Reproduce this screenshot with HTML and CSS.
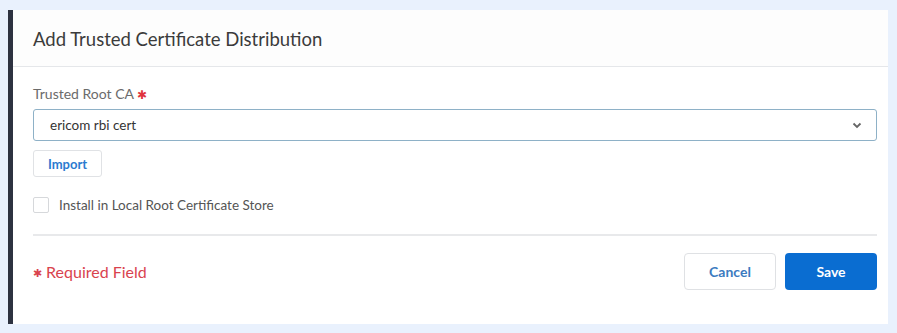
FILE: index.html
```html
<!DOCTYPE html>
<html lang="en">
<head>
    <meta charset="UTF-8">
    <title>Add Trusted Certificate Distribution</title>
    <link rel="stylesheet" href="styles.css">
</head>
<body>
    <div class="panel">
        <div class="panel-header">
            <h1>Add Trusted Certificate Distribution</h1>
        </div>
        <div class="panel-body">
            <label class="field-label">Trusted Root CA <span class="req">&#10033;</span></label>
            <div class="select">
                <span>ericom rbi cert</span>
                <svg class="chevron" width="10" height="7" viewBox="0 0 10 7">
                    <path d="M1.5 1.5 L5 5 L8.5 1.5" fill="none" stroke="#666" stroke-width="1.8"/>
                </svg>
            </div>
            <button class="btn-import">Import</button>
            <label class="check-row">
                <span class="checkbox"></span>
                Install in Local Root Certificate Store
            </label>
            <div class="divider"></div>
            <div class="footer">
                <span class="required"><span class="req-star">&#10033;</span> Required Field</span>
                <div class="actions">
                    <button class="btn btn-cancel">Cancel</button>
                    <button class="btn btn-save">Save</button>
                </div>
            </div>
        </div>
    </div>
</body>
</html>
```

FILE: styles.css
```css
body {
    margin: 0;
    padding: 10px 9px 0 8px;
    background-color: #e9f1fd;
    font-family: Lato, 'Open Sans', sans-serif;
}
.panel {
    width: 875px;
    height: 314px;
    background: white;
    border-left: 5px solid #2d3240;
    box-sizing: content-box;
}
.panel-header {
    height: 56px;
    border-bottom: 1px solid #e5e7ea;
    background: #fdfdfd;
    display: flex;
    align-items: center;
    padding-left: 20px;
}
h1 {
    margin: 0;
    font-size: 18.5px;
    font-weight: 400;
    color: #3b3b3b;
    padding-top: 1px;
}
.panel-body {
    padding: 18px 11px 0 20px;
    display: flex;
    flex-direction: column;
    align-items: flex-start;
}
.field-label {
    font-size: 14px;
    line-height: 17px;
    color: #6b6b6b;
    margin-bottom: 6px;
}
.req {
    color: #e0333d;
    font-size: 12px;
}
.select {
    width: 100%;
    height: 32px;
    box-sizing: border-box;
    border: 1.5px solid #8eb1c7;
    border-radius: 3px;
    display: flex;
    align-items: center;
    justify-content: space-between;
    padding: 0 14px 0 16px;
    font-size: 13.5px;
    color: #333;
}
.chevron {
    margin-top: 1px;
}
.btn-import {
    margin-top: 9px;
    height: 27px;
    width: 69px;
    border: 1px solid #e0e2e5;
    border-radius: 3px;
    background: white;
    color: #2b7bd0;
    font-family: Lato, sans-serif;
    font-size: 13px;
    font-weight: 700;
    padding: 0;
}
.check-row {
    margin-top: 20px;
    display: flex;
    align-items: center;
    gap: 10px;
    font-size: 13.5px;
    color: #555;
}
.checkbox {
    width: 14px;
    height: 14px;
    border: 1px solid #d6d8db;
    border-radius: 2px;
}
.divider {
    width: 100%;
    height: 2px;
    background: #e8e9eb;
    margin-top: 21px;
}
.footer {
    width: 100%;
    margin-top: 17px;
    display: flex;
    justify-content: space-between;
    align-items: center;
}
.required {
    color: #d9434e;
    font-size: 16px;
}
.req-star {
    font-size: 11px;
    vertical-align: 1px;
}
.actions {
    display: flex;
    gap: 9px;
}
.btn {
    width: 92px;
    height: 37px;
    border-radius: 4px;
    font-family: Lato, sans-serif;
    font-size: 14px;
    font-weight: 700;
    cursor: pointer;
}
.btn-cancel {
    background: white;
    border: 1px solid #dfe1e4;
    color: #3c7bbf;
}
.btn-save {
    background: #0a6dd1;
    border: none;
    color: white;
}
```
